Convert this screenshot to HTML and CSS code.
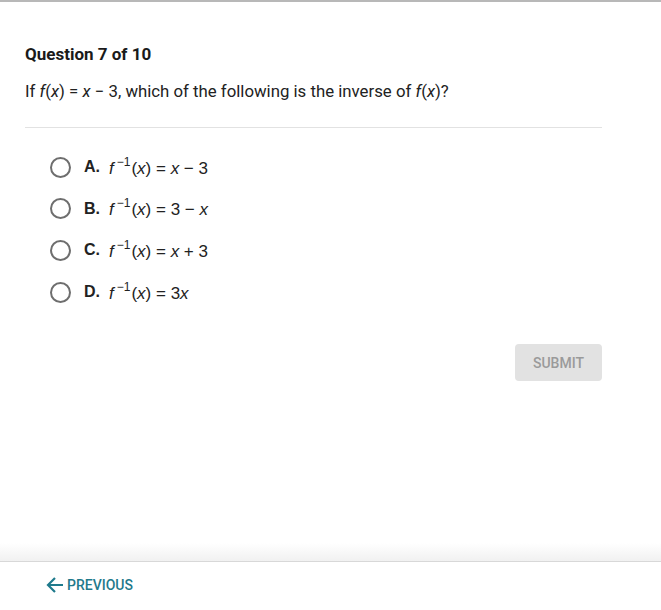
FILE: index.html
```html
<!DOCTYPE html>
<html>
<head>
<meta charset="utf-8">
<link rel="stylesheet" href="styles.css">
</head>
<body>
<div class="page">
  <main class="main">
    <h1 class="title">Question 7 of 10</h1>
    <p class="prompt">If <i>f</i>(<i>x</i>) = <i>x</i> &minus; 3, which of the following is the inverse of <i>f</i>(<i>x</i>)?</p>
    <hr class="divider">
    <ul class="options">
      <li class="option"><span class="radio"></span><span class="letter">A.</span><span class="math"><i>f</i><sup>&minus;1</sup>(<i>x</i>) = <i>x</i> &minus; 3</span></li>
      <li class="option"><span class="radio"></span><span class="letter">B.</span><span class="math"><i>f</i><sup>&minus;1</sup>(<i>x</i>) = 3 &minus; <i>x</i></span></li>
      <li class="option"><span class="radio"></span><span class="letter">C.</span><span class="math"><i>f</i><sup>&minus;1</sup>(<i>x</i>) = <i>x</i> + 3</span></li>
      <li class="option"><span class="radio"></span><span class="letter">D.</span><span class="math"><i>f</i><sup>&minus;1</sup>(<i>x</i>) = 3<i>x</i></span></li>
    </ul>
    <div class="actions"><button class="submit">SUBMIT</button></div>
  </main>
  <footer class="footer">
    <a class="prev"><svg width="20" height="18" viewBox="0 0 20 18"><path d="M18 9H3M10 2L3 9l7 7" fill="none" stroke="#1f7a8c" stroke-width="2.2"/></svg>PREVIOUS</a>
  </footer>
</div>
</body>
</html>
```

FILE: styles.css
```css
* { box-sizing: border-box; }
html, body { margin: 0; padding: 0; background: #fff; }
body { font-family: Roboto, "Liberation Sans", sans-serif; color: #222; }
.page { width: 661px; height: 610px; display: flex; flex-direction: column; border-top: 2px solid #b8b8b8; }
.main { flex: 1; padding: 0 59px 0 25px; background: linear-gradient(to bottom, #fff calc(100% - 18px), #f1f1f1 100%); border-bottom: 1px solid #d8d8d8; }
.title { margin: 42px 0 0; font-size: 17px; font-weight: 700; line-height: 20px; color: #1a1a1a; }
.prompt { margin: 17px 0 0; font-size: 16.8px; line-height: 20px; color: #222; }
.prompt i { font-style: italic; }
.divider { margin: 26px 0 0; border: 0; border-top: 1px solid #e2e2e2; }
.options { list-style: none; margin: 29px 0 0; padding: 0 0 0 25px; }
.option { display: flex; align-items: center; height: 20px; margin-bottom: 21.7px; font-family: "Liberation Sans", Arial, sans-serif; font-size: 16px; color: #222; }
.radio { width: 21px; height: 21px; border: 2px solid #6e6e6e; border-radius: 50%; margin-right: 13px; }
.letter { font-weight: 700; width: 25px; }
.math { font-size: 17px; }
.math sup { font-size: 12px; position: relative; top: -1px; padding-left: 3px; padding-right: 1px; }
.actions { display: flex; justify-content: flex-end; margin-top: 42px; }
.submit { width: 87px; height: 37px; border: 0; border-radius: 4px; background: #e2e2e2; color: #9a9a9a; font-family: Roboto, sans-serif; font-size: 14px; font-weight: 500; }
.footer { height: 48px; display: flex; align-items: center; padding-left: 45px; }
.prev { display: flex; align-items: center; gap: 2px; color: #1f7a8c; font-size: 14px; font-weight: 500; margin-top: -2px; }
```
